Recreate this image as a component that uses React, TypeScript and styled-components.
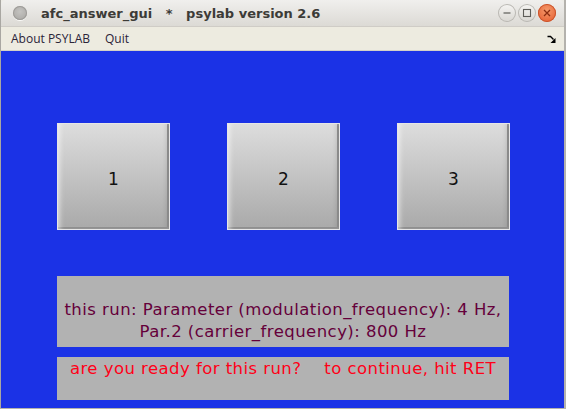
import React from "react";
import styled, { createGlobalStyle } from "styled-components";

const Global = createGlobalStyle`
  html, body { margin: 0; padding: 0; width: 566px; height: 409px; overflow: hidden; background: #3c3b37; }
  * { box-sizing: border-box; }
`;

const Window = styled.div`
  width: 566px;
  height: 409px;
  display: flex;
  flex-direction: column;
  background: #edece6;
  border-left: 1px solid #a9a7a2;
  border-right: 2px solid #b4b2ad;
  border-bottom: 1px solid #b4b2ad;
`;

const TitleBar = styled.div`
  height: 27px;
  display: flex;
  align-items: center;
  padding: 0 0 0 12px;
  background: linear-gradient(#f0efed, #dcdad5);
  border-bottom: 1px solid #cfccc6;
  border-radius: 5px 5px 0 0;
`;

const Dot = styled.span`
  width: 14px;
  height: 14px;
  border-radius: 50%;
  background: radial-gradient(circle at 50% 40%, #c4c3c0, #a6a4a0);
  box-shadow: inset 0 0 0 1px #9e9c98, 0 1px 0 #fafaf8;
  margin-right: 14px;
`;

const Title = styled.div`
  flex: 1;
  font-family: "DejaVu Sans", sans-serif;
  font-weight: bold;
  font-size: 13px;
  color: #3c3b37;
  white-space: pre;
`;

const Controls = styled.div`
  display: flex;
  gap: 2px;
  padding-right: 8px;
`;

const CtrlBtn = styled.span<{ $close?: boolean }>`
  width: 18px;
  height: 18px;
  border-radius: 50%;
  display: flex;
  align-items: center;
  justify-content: center;
  background: ${(p) =>
    p.$close
      ? "radial-gradient(circle at 50% 35%, #f49a6c, #e4582b)"
      : "linear-gradient(#f6f5f3, #d8d6d1)"};
  box-shadow: inset 0 0 0 1px ${(p) => (p.$close ? "#c9532b" : "#bab8b3")};
`;

const MenuBar = styled.div`
  height: 24px;
  display: flex;
  align-items: center;
  padding: 0 8px 0 10px;
  background: #edebe0;
  border-bottom: 1px solid #d4d1c7;
  font-family: "Open Sans", sans-serif;
  font-size: 12px;
  color: #2b2438;
`;

const MenuItem = styled.span`
  margin-right: 15px;
`;

const Spacer = styled.span`
  flex: 1;
`;

const Content = styled.div`
  flex: 1;
  background: #1b32e6;
  padding: 72px 0 0 56px;
  display: flex;
  flex-direction: column;
`;

const ButtonRow = styled.div`
  display: flex;
  gap: 57px;
`;

const AnswerButton = styled.button`
  width: 113px;
  height: 107px;
  padding: 4px 0 0 0;
  border: 1px solid #e6e6e6;
  background: linear-gradient(#dddddd, #a9a9a9);
  box-shadow: inset 4px 0 5px -2px rgba(255, 255, 255, 0.55),
    inset -2px -2px 0 #8a8a8a, inset -5px 0 5px -3px rgba(0, 0, 0, 0.15);
  font-family: "DejaVu Sans", sans-serif;
  font-size: 17px;
  color: #111;
  display: flex;
  align-items: center;
  justify-content: center;
`;

const Panel = styled.div<{ $h: number; $top: number }>`
  width: 452px;
  height: ${(p) => p.$h}px;
  margin-top: ${(p) => p.$top}px;
  background: #b2b2b2;
  font-family: "DejaVu Sans", sans-serif;
  font-size: 16.5px;
  text-align: center;
  letter-spacing: 0.45px;
`;

const InfoText = styled.div`
  padding-top: 23px;
  line-height: 22px;
  color: #65003a;
`;

const PromptText = styled.div`
  padding-top: 2px;
  line-height: 20px;
  color: #ff0018;
  white-space: pre;
`;

export default function App() {
  return (
    <>
      <Global />
      <Window>
        <TitleBar>
          <Dot />
          <Title>{"afc_answer_gui   *   psylab version 2.6"}</Title>
          <Controls>
            <CtrlBtn>
              <svg width="10" height="10" viewBox="0 0 10 10">
                <path d="M1.5 5h7" stroke="#5d5c58" strokeWidth="1.2" />
              </svg>
            </CtrlBtn>
            <CtrlBtn>
              <svg width="10" height="10" viewBox="0 0 10 10">
                <rect x="1.5" y="1.5" width="7" height="7" fill="none" stroke="#5d5c58" strokeWidth="1.1" />
              </svg>
            </CtrlBtn>
            <CtrlBtn $close>
              <svg width="10" height="10" viewBox="0 0 10 10">
                <path d="M2 2l6 6M8 2l-6 6" stroke="#8a2c10" strokeWidth="1.3" />
              </svg>
            </CtrlBtn>
          </Controls>
        </TitleBar>
        <MenuBar>
          <MenuItem>About PSYLAB</MenuItem>
          <MenuItem>Quit</MenuItem>
          <Spacer />
          <svg width="9" height="8" viewBox="0 0 9 8">
            <path d="M0.5 1.5h3l3 3" stroke="#000" strokeWidth="1.4" fill="none" />
            <path d="M8.5 3v5h-5z" fill="#000" />
          </svg>
        </MenuBar>
        <Content>
          <ButtonRow>
            <AnswerButton>1</AnswerButton>
            <AnswerButton>2</AnswerButton>
            <AnswerButton>3</AnswerButton>
          </ButtonRow>
          <Panel $h={71} $top={46}>
            <InfoText>
              this run: Parameter (modulation_frequency): 4 Hz,
              <br />
              Par.2 (carrier_frequency): 800 Hz
            </InfoText>
          </Panel>
          <Panel $h={43} $top={10}>
            <PromptText>{"are you ready for this run?    to continue, hit RET"}</PromptText>
          </Panel>
        </Content>
      </Window>
    </>
  );
}
